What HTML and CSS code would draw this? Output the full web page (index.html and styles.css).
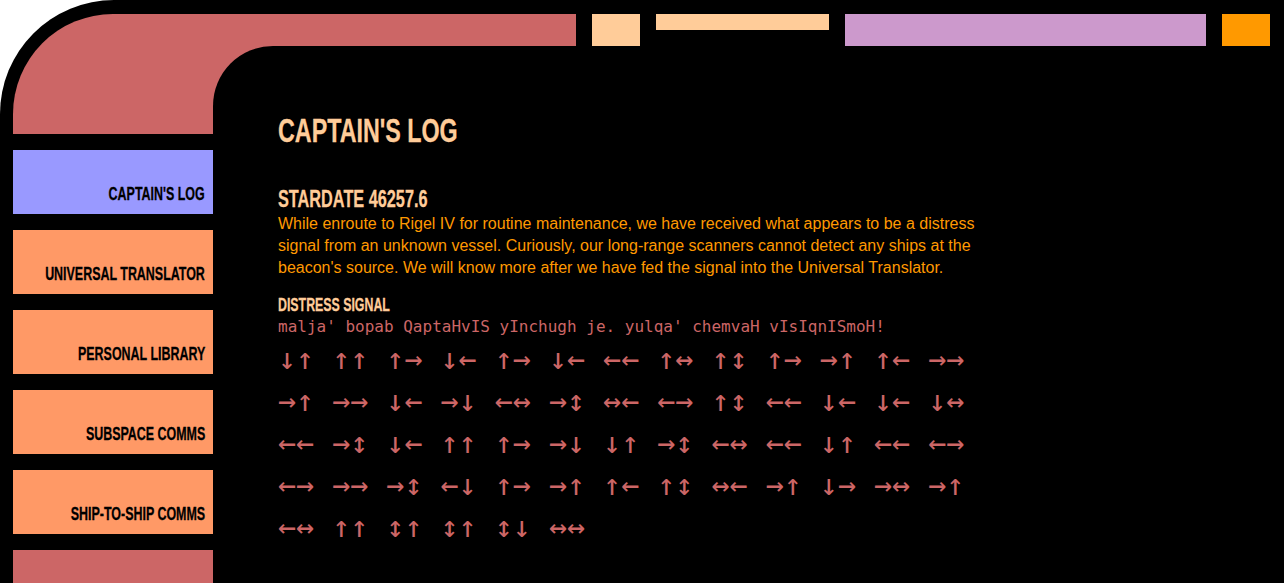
FILE: index.html
```html
<!DOCTYPE html>
<html lang="en">
<head>
<meta charset="utf-8">
<title>Captain's Log</title>
<link rel="stylesheet" href="styles.css">
</head>
<body>
<div class="frame">
  <div class="elbow"></div>
  <div class="topbar">
    <div class="bar arm"></div>
    <div class="bar peach small"></div>
    <div class="bar peach thin"></div>
    <div class="bar lilac wide"></div>
    <div class="bar orange small"></div>
  </div>
  <nav class="sidebar">
    <a class="btn active"><span class="label">CAPTAIN'S LOG</span></a>
    <a class="btn"><span class="label">UNIVERSAL TRANSLATOR</span></a>
    <a class="btn"><span class="label">PERSONAL LIBRARY</span></a>
    <a class="btn"><span class="label">SUBSPACE COMMS</span></a>
    <a class="btn"><span class="label">SHIP-TO-SHIP COMMS</span></a>
    <div class="btn fill"></div>
  </nav>
  <main class="main">
    <div class="content">
      <h1 class="title"><span class="cond">CAPTAIN'S LOG</span></h1>
      <h2 class="stardate"><span class="cond">STARDATE 46257.6</span></h2>
      <p class="entry">While enroute to Rigel IV for routine maintenance, we have received what appears to be a distress signal from an unknown vessel. Curiously, our long-range scanners cannot detect any ships at the beacon's source. We will know more after we have fed the signal into the Universal Translator.</p>
      <h3 class="signal-title"><span class="cond">DISTRESS SIGNAL</span></h3>
      <div class="klingon">malja' bopab QaptaHvIS yInchugh je. yulqa' chemvaH vIsIqnISmoH!</div>
      <div class="arrows">↓↑ ↑↑ ↑→ ↓← ↑→ ↓← ←← ↑↔ ↑↕ ↑→ →↑ ↑← →→ →↑ →→ ↓← →↓ ←↔ →↕ ↔← ←→ ↑↕ ←← ↓← ↓← ↓↔ ←← →↕ ↓← ↑↑ ↑→ →↓ ↓↑ →↕ ←↔ ←← ↓↑ ←← ←→ ←→ →→ →↕ ←↓ ↑→ →↑ ↑← ↑↕ ↔← →↑ ↓→ →↔ →↑ ←↔ ↑↑ ↕↑ ↕↑ ↕↓ ↔↔</div>
    </div>
  </main>
</div>
</body>
</html>
```
FILE: styles.css
```css
html, body {
  margin: 0;
  padding: 0;
  background: #ffffff;
  height: 100%;
  overflow: hidden;
}

.frame {
  box-sizing: border-box;
  height: 100vh;
  background: #000000;
  border-top-left-radius: 114px;
  padding: 14px 14px 0 13px;
  display: grid;
  grid-template-columns: 200px 1fr;
  grid-template-rows: 32px 88px 1fr;
  overflow: hidden;
}

.elbow {
  grid-column: 1;
  grid-row: 1 / span 2;
  background: #cc6666;
  border-top-left-radius: 100px;
}

.topbar {
  grid-column: 2;
  grid-row: 1;
  display: flex;
  gap: 16px;
}

.bar { height: 32px; }
.arm { width: 363px; background: #cc6666; }
.peach { background: #ffcc99; }
.small { width: 48px; }
.thin { width: 173px; height: 16px; }
.lilac { background: #cc99cc; }
.wide { flex: 1; }
.orange { background: #ff9900; }

.sidebar {
  grid-column: 1;
  grid-row: 3;
  display: flex;
  flex-direction: column;
  gap: 16px;
  padding-top: 16px;
}

.btn {
  height: 64px;
  flex: none;
  box-sizing: border-box;
  background: #ff9966;
  display: flex;
  align-items: flex-end;
  justify-content: flex-end;
  padding: 0 8px 10px 0;
  color: #000000;
  text-decoration: none;
}

.btn.active { background: #9999ff; }
.btn.fill { flex: 1; height: auto; background: #cc6666; }

.label {
  display: inline-block;
  font-family: "Liberation Sans", Arial, sans-serif;
  font-weight: bold;
  font-size: 19px;
  line-height: 20px;
  white-space: nowrap;
  -webkit-text-stroke: 0.3px #000000;
  transform: scaleX(0.655);
  transform-origin: right bottom;
}

.main {
  grid-column: 2;
  grid-row: 2 / span 2;
  background: linear-gradient(#cc6666, #cc6666) top left / 60px 60px no-repeat;
}

.content {
  height: 100%;
  box-sizing: border-box;
  background: #000000;
  border-top-left-radius: 60px;
  padding: 65px 0 0 65px;
}

.cond {
  display: inline-block;
  white-space: nowrap;
  -webkit-text-stroke: 0.3px #ffcc99;
  transform-origin: left center;
}

.title, .stardate, .signal-title {
  font-family: "Liberation Sans", Arial, sans-serif;
  font-weight: bold;
  color: #ffcc99;
  margin: 0;
}

.title {
  font-size: 33.5px;
  line-height: 40px;
}

.title .cond { transform: scaleX(0.695); }

.stardate {
  margin-top: 34px;
  font-size: 24px;
  line-height: 28px;
}

.stardate .cond { transform: scaleX(0.678); }

.entry {
  margin: 0;
  width: 700px;
  font-family: "Liberation Sans", Arial, sans-serif;
  font-size: 16px;
  line-height: 22px;
  color: #ff9900;
}

.signal-title {
  margin-top: 15px;
  font-size: 19px;
  line-height: 22px;
}

.signal-title .cond { transform: scaleX(0.65); }

.klingon {
  font-family: "DejaVu Sans Mono", monospace;
  font-size: 16px;
  line-height: 22px;
  color: #cc6666;
  white-space: nowrap;
}

.arrows {
  width: 710px;
  margin-top: 0;
  font-family: "DejaVu Sans Mono", monospace;
  font-size: 30px;
  line-height: 42px;
  color: #cc6666;
}
```
